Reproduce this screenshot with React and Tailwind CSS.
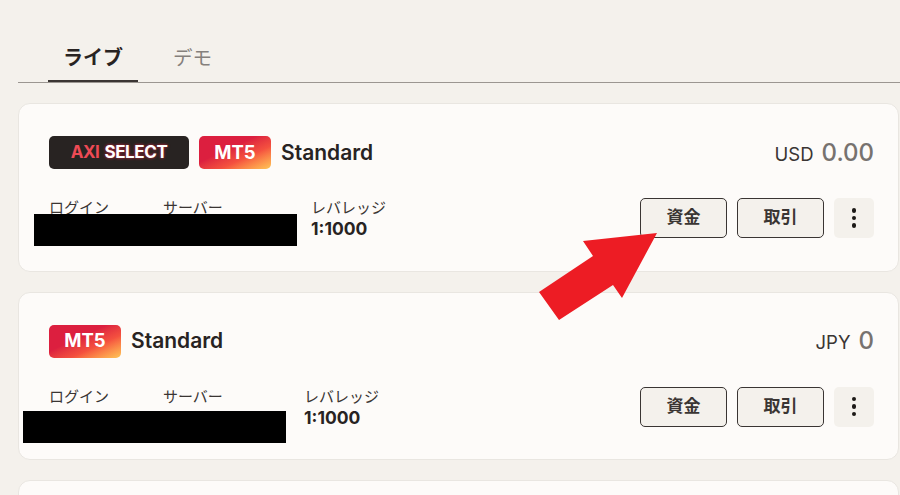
import React from "react";

const FONT = "font-['Inter','Noto_Sans_CJK_JP',sans-serif]";

const Mt5Badge = () => (
  <span className="flex h-[33px] w-[72px] items-center justify-center rounded-[5px] bg-gradient-to-br from-[#dc1f3f] from-40% via-[#f4503f] via-65% to-[#fdc656] text-[18.5px] font-bold text-white">
    MT5
  </span>
);

const SelectBadge = () => (
  <span className="flex h-[33px] w-[140px] items-center justify-center gap-[5px] rounded-[5px] bg-[#282322] text-[17px] font-bold tracking-[-0.4px]">
    <span className="text-[#ee4a55]">AXI</span>
    <span className="text-white [text-shadow:0_0_3px_#e0203f]">SELECT</span>
  </span>
);

const Field = ({ label, value, className }) => (
  <div className={className}>
    <p className="text-[15px] leading-[18px] text-[#3a3533]">{label}</p>
    <p className="mt-[2px] h-[20px] text-[17.5px] font-bold leading-[20px] text-[#282322]">{value}</p>
  </div>
);

const AccountCard = ({ select, currency, amount, leverageClass, maskClass }) => (
  <div className="relative h-[168.5px] rounded-[12px] border border-[#e9e6e1] bg-[#fdfbf9] pl-[30px] pr-[24px] pt-[32px]">
    <div className="flex h-[33px] items-center">
      {select && <SelectBadge />}
      {select && <span className="w-[10px]" />}
      <Mt5Badge />
      <span className="ml-[10px] text-[21px] font-semibold text-[#282322]">Standard</span>
      <div className="ml-auto flex items-baseline gap-[8px]">
        <span className="text-[18.5px] text-[#3a3533]">{currency}</span>
        <span className="text-[24px] font-medium text-[#77726f]">{amount}</span>
      </div>
    </div>
    <div className="mt-[30px] flex items-start">
      <Field label="ログイン" className="w-[114px]" />
      <Field label="サーバー" className={leverageClass} />
      <Field label="レバレッジ" value="1:1000" />
      <div className="ml-auto mt-[-1px] flex gap-[10px]">
        <button className="h-[40px] w-[87px] rounded-[5px] border border-[#3a3533] bg-[#f4f1ec] text-[17px] font-bold text-[#3a3533]">
          資金
        </button>
        <button className="h-[40px] w-[87px] rounded-[5px] border border-[#3a3533] bg-[#f4f1ec] text-[17px] font-bold text-[#3a3533]">
          取引
        </button>
        <button className="flex h-[40px] w-[40px] flex-col items-center justify-center gap-[3px] rounded-[5px] bg-[#f4f1ec]">
          <span className="size-[4.5px] rounded-full bg-[#1c1917]" />
          <span className="size-[4.5px] rounded-full bg-[#1c1917]" />
          <span className="size-[4.5px] rounded-full bg-[#1c1917]" />
        </button>
      </div>
    </div>
    {/* redacted account details */}
    <div className={`absolute h-[32px] w-[263px] bg-black ${maskClass}`} />
  </div>
);

export default function App() {
  return (
    <div className={`relative h-[495px] w-[900px] overflow-hidden bg-[#f4f1ec] pl-[18px] ${FONT}`}>
      {/* Tabs */}
      <div className="flex h-[83px] items-end border-b border-[#9b9691] pl-[30px]">
        <div className="flex h-[42px] w-[90px] items-start justify-center border-b-2 border-[#3a3533] pt-[5px] text-[20px] font-bold leading-[26px] text-[#282322]">
          ライブ
        </div>
        <div className="ml-[35px] h-[42px] pt-[5px] text-[19.5px] leading-[26px] text-[#85807c]">デモ</div>
      </div>

      {/* Accounts */}
      <div className="mt-[20px] flex flex-col gap-[20px] pr-[1px]">
        <AccountCard
          select
          currency="USD"
          amount="0.00"
          leverageClass="w-[148px]"
          maskClass="left-[15px] top-[110px]"
        />
        <AccountCard
          currency="JPY"
          amount="0"
          leverageClass="w-[141px]"
          maskClass="left-[4px] top-[118.5px]"
        />
        <div className="h-[100px] rounded-[12px] border border-[#e9e6e1] bg-[#fdfbf9]" />
      </div>

      {/* Red arrow annotation */}
      <svg className="absolute left-[530px] top-[225px]" width="140" height="105" viewBox="0 0 140 105">
        <polygon points="127,8 53,16 63,31 9,67 29,95 83,60 92,73" fill="#ed1c24" />
      </svg>
    </div>
  );
}
